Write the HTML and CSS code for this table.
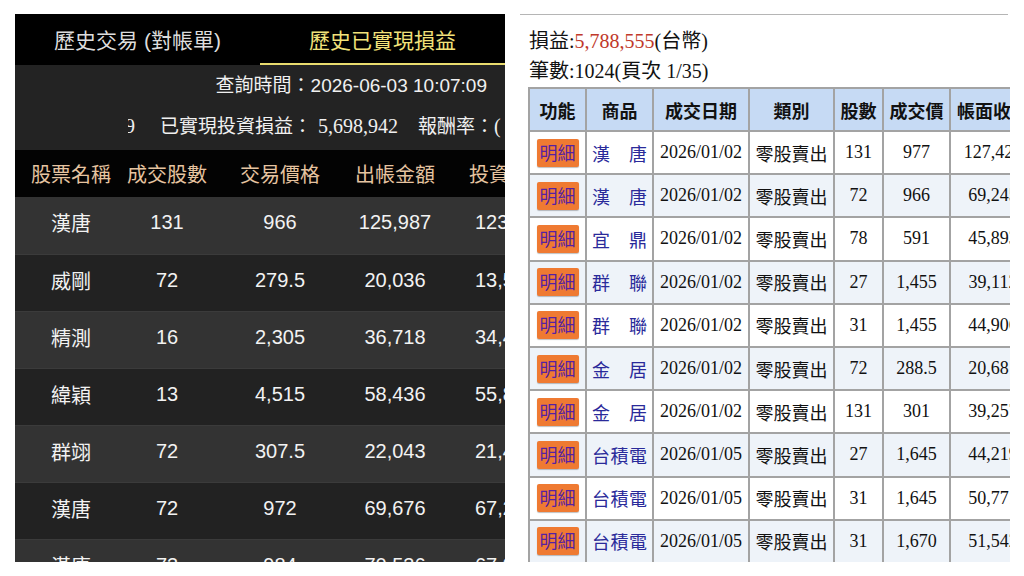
FILE: index.html
```html
<!DOCTYPE html>
<html lang="zh-Hant">
<head>
<meta charset="utf-8">
<link rel="stylesheet" href="styles.css">
</head>
<body>
<div class="page">
  <section class="app">
    <div class="tabs">
      <div class="tab">歷史交易 (對帳單)</div>
      <div class="tab active">歷史已實現損益</div>
    </div>
    <div class="info">
      <div class="query">查詢時間：2026-06-03 10:07:09</div>
      <div class="summary-clip">
        <div class="summary"><span class="serif">9</span><span class="gap"></span>已實現投資損益：<span class="serif num">5,698,942</span><span class="gap2"></span>報酬率：<span class="serif">(</span></div>
      </div>
    </div>
    <div class="grid head">
      <div class="c1">股票名稱</div><div class="c2">成交股數</div><div class="c3">交易價格</div><div class="c4">出帳金額</div><div class="c5">投資成本</div>
    </div>
    <div class="grid row odd"><div class="c1">漢唐</div><div class="c2">131</div><div class="c3">966</div><div class="c4">125,987</div><div class="c5">123,870</div></div>
    <div class="grid row"><div class="c1">威剛</div><div class="c2">72</div><div class="c3">279.5</div><div class="c4">20,036</div><div class="c5">13,586</div></div>
    <div class="grid row odd"><div class="c1">精測</div><div class="c2">16</div><div class="c3">2,305</div><div class="c4">36,718</div><div class="c5">34,413</div></div>
    <div class="grid row"><div class="c1">緯穎</div><div class="c2">13</div><div class="c3">4,515</div><div class="c4">58,436</div><div class="c5">55,890</div></div>
    <div class="grid row odd"><div class="c1">群翊</div><div class="c2">72</div><div class="c3">307.5</div><div class="c4">22,043</div><div class="c5">21,443</div></div>
    <div class="grid row"><div class="c1">漢唐</div><div class="c2">72</div><div class="c3">972</div><div class="c4">69,676</div><div class="c5">67,230</div></div>
    <div class="grid row odd"><div class="c1">漢唐</div><div class="c2">73</div><div class="c3">984</div><div class="c4">70,536</div><div class="c5">67,910</div></div>
  </section>

  <section class="web">
    <div class="rule"></div>
    <div class="totals">
      <div>損益<span class="serif">:</span><span class="serif red">5,788,555</span><span class="serif">(</span>台幣<span class="serif">)</span></div>
      <div>筆數<span class="serif">:1024(</span>頁次<span class="serif"> 1/35)</span></div>
    </div>
    <table class="trades">
      <colgroup>
        <col class="w1"><col class="w2"><col class="w3"><col class="w4"><col class="w5"><col class="w6"><col class="w7">
      </colgroup>
      <thead>
        <tr><th>功能</th><th>商品</th><th>成交日期</th><th>類別</th><th>股數</th><th>成交價</th><th>帳面收入</th></tr>
      </thead>
      <tbody>
        <tr><td><span class="btn">明細</span></td><td class="prod">漢唐</td><td>2026/01/02</td><td class="cjk">零股賣出</td><td>131</td><td>977</td><td>127,427</td></tr>
        <tr class="alt"><td><span class="btn">明細</span></td><td class="prod">漢唐</td><td>2026/01/02</td><td class="cjk">零股賣出</td><td>72</td><td>966</td><td>69,245</td></tr>
        <tr><td><span class="btn">明細</span></td><td class="prod">宜鼎</td><td>2026/01/02</td><td class="cjk">零股賣出</td><td>78</td><td>591</td><td>45,893</td></tr>
        <tr class="alt"><td><span class="btn">明細</span></td><td class="prod">群聯</td><td>2026/01/02</td><td class="cjk">零股賣出</td><td>27</td><td>1,455</td><td>39,112</td></tr>
        <tr><td><span class="btn">明細</span></td><td class="prod">群聯</td><td>2026/01/02</td><td class="cjk">零股賣出</td><td>31</td><td>1,455</td><td>44,906</td></tr>
        <tr class="alt"><td><span class="btn">明細</span></td><td class="prod">金居</td><td>2026/01/02</td><td class="cjk">零股賣出</td><td>72</td><td>288.5</td><td>20,681</td></tr>
        <tr><td><span class="btn">明細</span></td><td class="prod">金居</td><td>2026/01/02</td><td class="cjk">零股賣出</td><td>131</td><td>301</td><td>39,257</td></tr>
        <tr class="alt"><td><span class="btn">明細</span></td><td class="prod">台積電</td><td>2026/01/05</td><td class="cjk">零股賣出</td><td>27</td><td>1,645</td><td>44,219</td></tr>
        <tr><td><span class="btn">明細</span></td><td class="prod">台積電</td><td>2026/01/05</td><td class="cjk">零股賣出</td><td>31</td><td>1,645</td><td>50,771</td></tr>
        <tr class="alt"><td><span class="btn">明細</span></td><td class="prod">台積電</td><td>2026/01/05</td><td class="cjk">零股賣出</td><td>31</td><td>1,670</td><td>51,542</td></tr>
      </tbody>
    </table>
  </section>
</div>
</body>
</html>
```

FILE: styles.css
```css
* { box-sizing: border-box; }
html, body { margin: 0; padding: 0; background: #fff; }
body {
  width: 1024px;
  height: 576px;
  overflow: hidden;
  font-family: "Liberation Sans", "Noto Sans CJK TC", sans-serif;
}
.page {
  display: flex;
  gap: 13px;
  padding: 14px 0 0 15px;
}

/* ---------- left: dark app ---------- */
.app {
  width: 490px;
  height: 548px;
  overflow: hidden;
  background: #222;
  color: #eee;
}
.tabs {
  display: grid;
  grid-template-columns: 245px 245px;
  height: 51px;
  background: #000;
}
.tab {
  display: flex;
  align-items: center;
  justify-content: center;
  font-size: 21px;
  color: #ddd;
  padding-bottom: 2px;
}
.tab.active {
  color: #f2e27a;
  border-bottom: 2px solid #e9dc6e;
  padding-bottom: 0;
}
.info {
  height: 85px;
  background: #232323;
  padding-top: 8px;
}
.query {
  text-align: right;
  padding-right: 18px;
  font-size: 19px;
  line-height: 26px;
  color: #f0f0f0;
}
.summary-clip {
  margin: 13px 0 0 113px;
  overflow: hidden;
  white-space: nowrap;
}
.summary {
  font-size: 19px;
  line-height: 28px;
  margin-left: -3px;
  color: #f0f0f0;
}
.summary .serif { font-size: 20px; }
.summary .num { margin-left: 6px; }
.gap { display: inline-block; width: 25px; }
.gap2 { display: inline-block; width: 20px; }
.serif { font-family: "Liberation Serif", "Noto Sans CJK TC", serif; }

.grid {
  display: grid;
  grid-template-columns: 112px 80px 146px 84px 140px;
  align-items: center;
  text-align: center;
  white-space: nowrap;
}
.grid .c5 { text-align: left; padding-left: 38px; }
.head {
  height: 47px;
  background: #030303;
  color: #e6c4a0;
  font-size: 20px;
}
.head .c5 { padding-left: 32px; }
.row {
  height: 57px;
  font-size: 20px;
  color: #f2f2f2;
  background: #222;
  border-top: 1px solid #3b3b3b;
  padding-bottom: 6px;
}
.row.odd { background: #333; }
.head + .row { border-top: none; }

/* ---------- right: web table ---------- */
.web {
  width: 492px;
  height: 548px;
  overflow: hidden;
  background: #fff;
  color: #111;
}
.rule {
  margin-left: 2px;
  width: 488px;
  border-top: 1px solid #b5b5b5;
}
.totals {
  padding: 11px 0 0 11px;
  font-size: 20px;
  line-height: 30px;
  height: 72px;
}
.red { color: #c0392b; }
.trades {
  margin-left: 10px;
  border-collapse: collapse;
  table-layout: fixed;
  width: 507px;
}
.w1 { width: 57px; }
.w2 { width: 67px; }
.w3 { width: 96px; }
.w4 { width: 85px; }
.w5 { width: 49px; }
.w6 { width: 67px; }
.w7 { width: 86px; }
.trades th, .trades td {
  border: 2px solid #a3a3a3;
  padding: 0;
  text-align: center;
  white-space: nowrap;
  overflow: hidden;
}
.trades th {
  height: 43px;
  background: #c6daf4;
  font-weight: bold;
  font-size: 18px;
  font-family: "Liberation Sans", "Noto Sans CJK TC", sans-serif;
  color: #111;
}
.trades td {
  height: 43.2px;
  font-family: "Liberation Serif", "Noto Sans CJK TC", serif;
  font-size: 18px;
  color: #111;
}
.trades tr.alt td { background: #eef3f9; }
.trades td.cjk { font-family: "Noto Sans CJK TC", sans-serif; }
.trades td.prod {
  font-family: "Noto Sans CJK TC", sans-serif;
  color: #2a2a9a;
  text-align: justify;
  text-align-last: justify;
  padding: 0 5px;
}
.btn {
  display: inline-block;
  width: 42px;
  height: 28px;
  line-height: 27px;
  background: #ef7a32;
  color: #5521a3;
  font-family: "Noto Sans CJK TC", sans-serif;
  font-size: 18px;
  border-radius: 2px;
  box-shadow: 0 1px 1px rgba(0,0,0,0.25);
  vertical-align: middle;
}
```
